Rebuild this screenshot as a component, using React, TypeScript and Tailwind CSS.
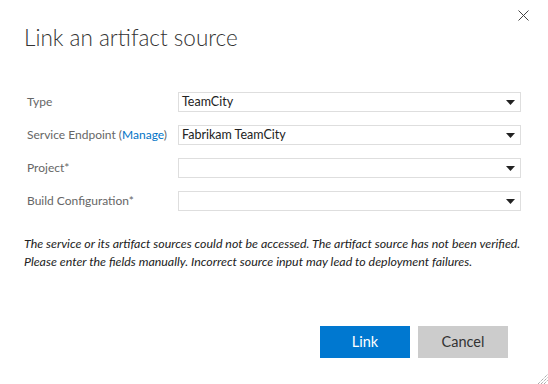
import React from "react";

const font = { fontFamily: 'Lato, "Open Sans", sans-serif' };

function Arrow() {
  return (
    <svg width="9" height="5" viewBox="0 0 9 5" className="shrink-0">
      <path d="M0 0 H9 L4.5 5 Z" fill="#222" />
    </svg>
  );
}

function Select({ value }: { value?: string }) {
  return (
    <div className="flex h-[20px] w-[343px] items-center justify-between border border-[#dedede] bg-white pl-[3px] pr-[5px]">
      <span className="text-[12.5px] leading-none text-[#222]">{value ?? ""}</span>
      <Arrow />
    </div>
  );
}

function Row({ label, value }: { label: React.ReactNode; value?: string }) {
  return (
    <div className="flex h-[20px] items-center">
      <div className="w-[151px] text-[12px] text-[#666] leading-none">{label}</div>
      <Select value={value} />
    </div>
  );
}

export default function App() {
  return (
    <div className="relative h-[384px] w-[548px] overflow-hidden bg-white" style={font}>
      <button className="absolute left-[518px] top-[10px] h-[11px] w-[11px]">
        <svg width="11" height="11" viewBox="0 0 11 11">
          <path d="M0.5 0.5 L10.5 10.5 M10.5 0.5 L0.5 10.5" stroke="#444" strokeWidth="1" />
        </svg>
      </button>
      <div className="flex flex-col pl-[24px] pr-[26px]">
        <h1 className="mt-[22px] text-[22.5px] font-light leading-[32px] text-[#333]">Link an artifact source</h1>
        <div className="mt-[38px] flex flex-col gap-[13px] pl-[3px]">
          <Row label="Type" value="TeamCity" />
          <Row
            label={
              <span>
                Service Endpoint (<span className="text-[#0073c6]">Manage</span>)
              </span>
            }
            value="Fabrikam TeamCity"
          />
          <Row label="Project*" />
          <Row label="Build Configuration*" />
        </div>
        <p className="mt-[24px] whitespace-nowrap text-[12.4px] italic leading-[18px] text-[#222]">
          The service or its artifact sources could not be accessed. The artifact source has not been verified.
          <br />
          Please enter the fields manually. Incorrect source input may lead to deployment failures.
        </p>
        <div className="mt-[55px] flex justify-end gap-[8px] pr-[14px]">
          <button className="h-[32px] w-[90px] bg-[#0078d0] text-[14.5px] text-white">Link</button>
          <button className="h-[32px] w-[90px] bg-[#cccccc] text-[14.5px] text-[#333]">Cancel</button>
        </div>
      </div>
      <svg className="absolute bottom-0 right-0" width="11" height="10" viewBox="0 0 11 10">
        <path d="M1 10 L11 0 M4 10 L11 3 M7 10 L11 6" stroke="#888" strokeWidth="1" strokeDasharray="1 1" />
      </svg>
    </div>
  );
}
